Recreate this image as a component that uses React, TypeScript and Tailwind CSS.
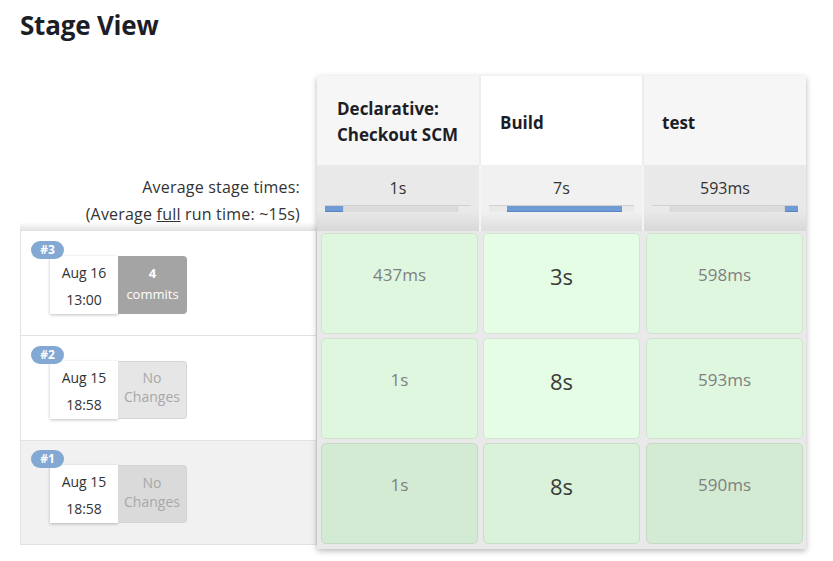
import React from "react";

type Row = {
  n: number;
  date: string;
  time: string;
  commits: number | null;
  leftBg: string;
  changesBg: string;
  cells: { text: string; big: boolean; cls: string }[];
};

const colMargins = ["ml-[4px] mr-[1px]", "mx-[2px]", "ml-[2px] mr-[3px]"];

const rows: Row[] = [
  {
    n: 3,
    date: "Aug 16",
    time: "13:00",
    commits: 4,
    leftBg: "bg-white",
    changesBg: "bg-[#a4a4a4]",
    cells: [
      { text: "437ms", big: false, cls: "bg-[#dff7df] border-[#cfe3cf]" },
      { text: "3s", big: true, cls: "bg-[#e5fde5] border-[#d3e6d3]" },
      { text: "598ms", big: false, cls: "bg-[#dff7df] border-[#cfe3cf]" },
    ],
  },
  {
    n: 2,
    date: "Aug 15",
    time: "18:58",
    commits: null,
    leftBg: "bg-white",
    changesBg: "bg-[#e6e6e6]",
    cells: [
      { text: "1s", big: false, cls: "bg-[#dff7df] border-[#cfe3cf]" },
      { text: "8s", big: true, cls: "bg-[#e5fde5] border-[#d3e6d3]" },
      { text: "593ms", big: false, cls: "bg-[#dff7df] border-[#cfe3cf]" },
    ],
  },
  {
    n: 1,
    date: "Aug 15",
    time: "18:58",
    commits: null,
    leftBg: "bg-[#f1f1f1]",
    changesBg: "bg-[#dadada]",
    cells: [
      { text: "1s", big: false, cls: "bg-[#d3ebd3] border-[#c5d9c5]" },
      { text: "8s", big: true, cls: "bg-[#d9f2d9] border-[#c9dec9]" },
      { text: "590ms", big: false, cls: "bg-[#d3ebd3] border-[#c5d9c5]" },
    ],
  },
];

function Bar({ mode }: { mode: 0 | 1 | 2 }) {
  const blue = "bg-[#6e9ad6] border-b border-[#5a85c2]";
  const light = "bg-[#e9e9e9]";
  const gray = "bg-[#dcdcdc]";
  return (
    <div className="mx-[8px] flex h-[7px] overflow-hidden border-t border-[#d0d0d0]">
      <div className={`w-[18px] ${mode === 0 ? blue : light}`} />
      <div className={`w-[115px] ${mode === 1 ? blue : gray} ${mode === 1 ? "" : "border-x border-[#d2d2d2]"}`} />
      <div className={`flex-1 ${mode === 2 ? blue : light}`} />
    </div>
  );
}

export default function App() {
  return (
    <div
      className="min-h-[561px] w-[833px] bg-white pl-[20px] text-[#333]"
      style={{ fontFamily: '"Open Sans", "Noto Sans", sans-serif' }}
    >
      <h2 className="pt-[7px] text-[26px] font-bold leading-[36px] tracking-[-0.2px] text-[#1d1d26]">
        Stage View
      </h2>
      <div className="mt-[33px] flex">
        {/* left column */}
        <div className="w-[297px]">
          <div className="h-[89px]" />
          <div className="h-[65px] bg-gradient-to-b from-white from-[88%] to-[#e4e4e4] pr-[17px] pt-[9px] text-right text-[16px] leading-[27px] tracking-[0.2px] text-[#333]">
            <div>Average stage times:</div>
            <div>
              (Average <span className="underline">full</span> run time: ~15s)
            </div>
          </div>
          {rows.map((r, i) => (
            <div
              key={r.n}
              className={`flex h-[105px] items-center border-x border-t border-[#e2e2e2] pl-[29px] pt-[3px] ${r.leftBg} ${i === rows.length - 1 ? "border-b" : ""}`}
            >
              <div className="relative flex h-[58px]">
                <div className="absolute left-[-19px] top-[-15px] z-10 flex h-[18px] w-[33px] items-center justify-center rounded-full bg-[#83a8d4] text-[12px] font-bold text-white">
                  #{r.n}
                </div>
                <div className="flex w-[68px] flex-col items-center bg-white pt-[3px] text-[14px] leading-[27px] text-[#333] shadow-[0_1px_3px_rgba(0,0,0,0.25)]">
                  <div>{r.date}</div>
                  <div>{r.time}</div>
                </div>
                {r.commits !== null ? (
                  <div className={`flex w-[69px] flex-col items-center justify-center rounded-r-[4px] ${r.changesBg} pb-[2px] text-[13px] leading-[21px] text-white`}>
                    <div className="font-bold">{r.commits}</div>
                    <div>commits</div>
                  </div>
                ) : (
                  <div className={`flex w-[69px] flex-col items-center justify-center rounded-r-[4px] border border-l-0 border-[#d4d4d4] ${r.changesBg} pb-[5px] text-[14px] leading-[19px] text-[#a8a8a8]`}>
                    <div>No</div>
                    <div>Changes</div>
                  </div>
                )}
              </div>
            </div>
          ))}
        </div>

        {/* stage table */}
        <div className="w-[489px] self-start bg-[#e9e9e9] shadow-[0_2px_6px_rgba(0,0,0,0.28)]">
          <div className="grid h-[89px] grid-cols-[162px_161px_162px] gap-[2px] bg-[#ececec] text-[17px] font-bold leading-[26px] text-[#1d1d26]">
            <div className="flex items-center bg-[#f6f6f6] pl-[20px] pt-[3px]">
              <div>
                Declarative:
                <br />
                Checkout SCM
              </div>
            </div>
            <div className="flex items-center bg-white pl-[19px] pt-[5px]">Build</div>
            <div className="flex items-center bg-[#f6f6f6] pl-[18px] pt-[5px]">test</div>
          </div>
          <div className="grid h-[66px] grid-cols-[162px_161px_162px] gap-[2px] bg-[#f4f4f4] text-[16px] text-[#333]">
            <div className="bg-gradient-to-b from-[#e9e9e9] from-[70%] to-[#d8d8d8] pt-[12px]">
              <div className="text-center leading-[22px]">1s</div>
              <div className="mt-[6px]">
                <Bar mode={0} />
              </div>
            </div>
            <div className="bg-gradient-to-b from-[#f1f1f1] from-[70%] to-[#dedede] pt-[12px]">
              <div className="text-center leading-[22px]">7s</div>
              <div className="mt-[6px]">
                <Bar mode={1} />
              </div>
            </div>
            <div className="bg-gradient-to-b from-[#e9e9e9] from-[70%] to-[#d8d8d8] pt-[12px]">
              <div className="text-center leading-[22px]">593ms</div>
              <div className="mt-[6px]">
                <Bar mode={2} />
              </div>
            </div>
          </div>
          {rows.map((r) => (
            <div key={r.n} className="grid h-[105px] grid-cols-[162px_161px_162px] gap-[2px]">
              {r.cells.map((c, j) => (
                <div
                  key={j}
                  className={`my-[2px] ${colMargins[j]} flex items-center justify-center rounded-[5px] border ${c.cls} ${c.big ? "pb-[14px] text-[22px] text-[#3a3a3a]" : "pb-[18px] text-[17px] text-[#7f7f7f]"}`}
                >
                  {c.text}
                </div>
              ))}
            </div>
          ))}
          <div className="h-[3px]" />
        </div>
      </div>
    </div>
  );
}
